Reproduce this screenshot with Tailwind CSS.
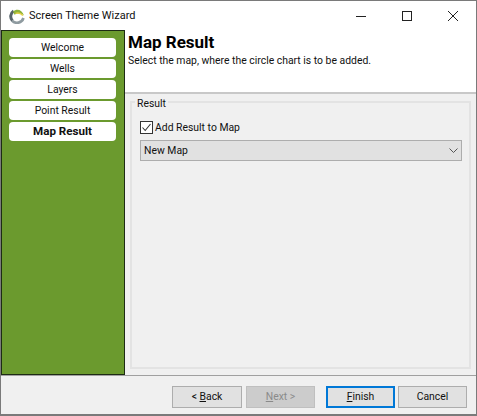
<!doctype html>
<html lang="en">
  <head>
    <meta charset="UTF-8" />
    <title>Screen Theme Wizard</title>
    <script src="https://cdn.jsdelivr.net/npm/@tailwindcss/browser@4"></script>
  </head>
  <body class="m-0 h-[416px] w-[477px] overflow-hidden bg-white font-['Roboto',sans-serif] text-[10.4px] text-[#111]">
    <div class="flex h-[416px] w-[477px] flex-col border border-[#7a7a7a] border-b-2">
      <!-- Title bar -->
      <div class="flex h-[29px] shrink-0 items-center bg-white pl-2">
        <svg class="h-[16px] w-[16px]" viewBox="0 0 16 16" fill="none">
          <path d="M3.4 12.8A6.6 6.6 0 0 1 4.6 3" stroke="#56636a" stroke-width="3" />
          <path d="M4 3.4C8 0.4 13 1.6 15 7.5C12 5 8 5 5.5 6.8Z" fill="#8db33a" />
          <path d="M6.5 5.4c3 -1 5.4 0 7.4 2.2" stroke="#e4cf45" stroke-width="1.5" />
          <path d="M3 12.6A6.8 6.8 0 0 0 14.5 10" stroke="#8f9ba0" stroke-width="2.6" />
        </svg>
        <span class="ml-[4px] pt-[1px] text-[11px]">Screen Theme Wizard</span>
        <div class="ml-auto flex items-center">
          <svg class="h-[46px] w-[46px] p-[18px]" viewBox="0 0 10 10" fill="none" stroke="#222"><path d="M0 5.5H10" /></svg>
          <svg class="h-[46px] w-[46px] p-[18px]" viewBox="0 0 10 10" fill="none" stroke="#222"><rect x="0.5" y="0.5" width="9" height="9" /></svg>
          <svg class="h-[46px] w-[46px] p-[18px]" viewBox="0 0 10 10" fill="none" stroke="#222"><path d="M0 0L10 10M10 0L0 10" /></svg>
        </div>
      </div>

      <div class="flex min-h-0 flex-1">
        <!-- Step list -->
        <div class="flex w-[124px] shrink-0 flex-col gap-[2px] border border-[#1d2b14] bg-[#6b9a2e] pt-[7px] pl-[7px]">
          <div class="flex h-[19px] w-[107px] items-center justify-center rounded-[4px] bg-white">Welcome</div>
          <div class="flex h-[19px] w-[107px] items-center justify-center rounded-[4px] bg-white">Wells</div>
          <div class="flex h-[19px] w-[107px] items-center justify-center rounded-[4px] bg-white">Layers</div>
          <div class="flex h-[19px] w-[107px] items-center justify-center rounded-[4px] bg-white">Point Result</div>
          <div class="flex h-[19px] w-[107px] items-center justify-center rounded-[4px] bg-white text-[11.6px] font-bold">Map Result</div>
        </div>

        <!-- Page -->
        <div class="flex min-w-0 flex-1 flex-col bg-[#f0f0f0]">
          <div class="h-[64px] shrink-0 border-b-2 border-[#c8c8c8] bg-white pt-[1px] pl-[3px]">
            <div class="text-[17px] leading-[22px] font-bold text-black">Map Result</div>
            <div class="leading-[15px]">Select the map, where the circle chart is to be added.</div>
          </div>
          <div class="flex-1 px-[5px] pt-[7px] pb-[6px]">
            <div class="relative h-full border-2 border-[#e3e3e3] pt-[16px] pl-[8px]">
              <span class="absolute -top-[6px] left-[3px] bg-[#f0f0f0] px-[2px] leading-[13px]">Result</span>
              <label class="flex h-[16px] items-center gap-[2px]">
                <svg class="h-[13px] w-[13px]" viewBox="0 0 13 13" fill="none">
                  <rect x="0.5" y="0.5" width="12" height="12" fill="#fff" stroke="#333" />
                  <path d="M2.5 6.5L5.2 9.5L10.5 3" stroke="#333" stroke-width="1.1" />
                </svg>
                <span class="pt-[1px]">Add Result to Map</span>
              </label>
              <div class="mt-[5px] flex h-[21px] w-[322px] items-center justify-between border border-[#adadad] bg-[#e1e1e1] pr-[3px] pl-[3px]">
                New Map
                <svg class="h-[7px] w-[9px]" viewBox="0 0 9 7" fill="none" stroke="#555"><path d="M0.5 1.5L4.5 5.5L8.5 1.5" /></svg>
              </div>
            </div>
          </div>
        </div>
      </div>

      <!-- Footer -->
      <div class="flex h-[39px] shrink-0 items-start border-t border-[#a0a0a0] bg-[#f0f0f0] pt-[10px] pl-[171px]">
        <button class="h-[22px] w-[70px] border border-[#adadad] bg-[#e1e1e1]">&lt; <u>B</u>ack</button>
        <button class="ml-[4px] h-[22px] w-[69px] border border-[#bfbfbf] bg-[#cccccc] text-[#8a8a8a]"><u>N</u>ext &gt;</button>
        <button class="ml-[11px] h-[22px] w-[69px] border-2 border-[#0078d7] bg-[#e1e1e1]"><u>F</u>inish</button>
        <button class="ml-[3px] h-[22px] w-[69px] border border-[#adadad] bg-[#e1e1e1]">Cancel</button>
      </div>
    </div>
  </body>
</html>
